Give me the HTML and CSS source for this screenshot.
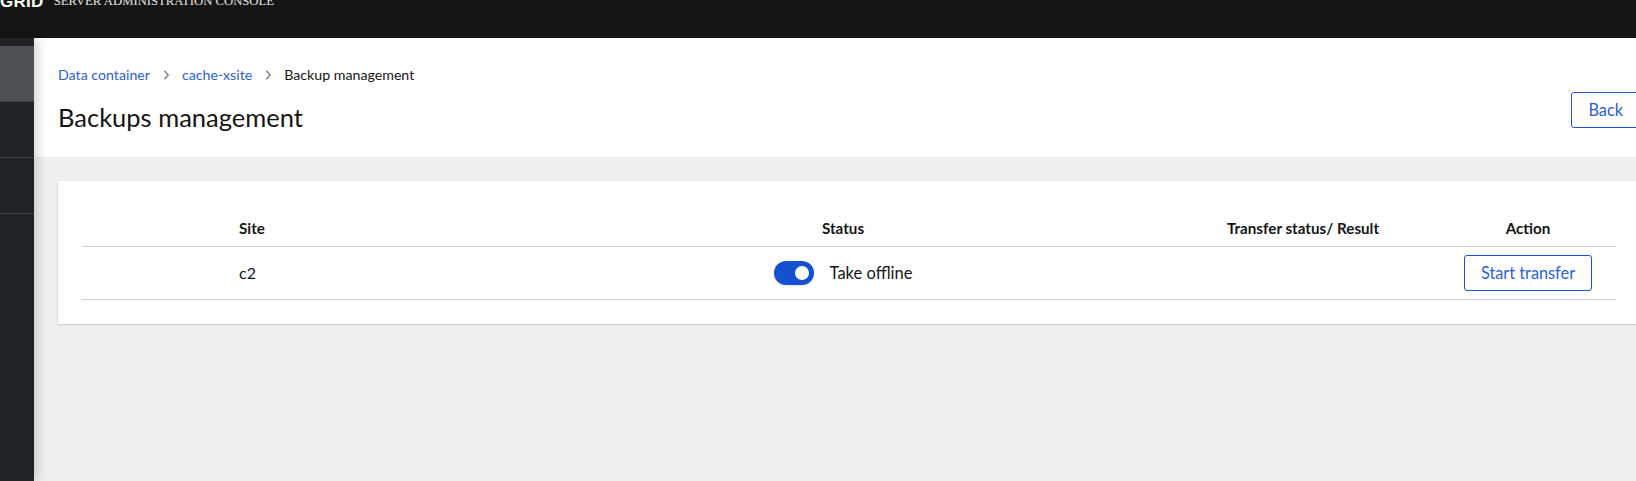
FILE: index.html
```html
<!DOCTYPE html>
<html lang="en">
<head>
<meta charset="utf-8">
<title>Backups management</title>
<link rel="stylesheet" href="styles.css">
</head>
<body>
<header class="masthead">
  <span class="logo">GRID</span>
  <span class="console-name">SERVER ADMINISTRATION CONSOLE</span>
</header>
<div class="shell">
  <nav class="sidebar">
    <div class="nav-item nav-item-active"></div>
    <div class="nav-item"></div>
    <div class="nav-item"></div>
  </nav>
  <main class="main">
    <section class="page-header">
      <ol class="breadcrumb">
        <li><a class="crumb-link" href="#">Data container</a></li>
        <li class="crumb-sep"><svg viewBox="0 0 8 12" width="7" height="10"><path d="M1.5 1 L6 6 L1.5 11" fill="none" stroke="#8a8d90" stroke-width="2"/></svg></li>
        <li><a class="crumb-link" href="#">cache-xsite</a></li>
        <li class="crumb-sep"><svg viewBox="0 0 8 12" width="7" height="10"><path d="M1.5 1 L6 6 L1.5 11" fill="none" stroke="#8a8d90" stroke-width="2"/></svg></li>
        <li class="crumb-current">Backup management</li>
      </ol>
      <div class="title-row">
        <h1 class="page-title">Backups management</h1>
        <button class="btn btn-secondary btn-back">Back</button>
      </div>
    </section>
    <section class="page-body">
      <div class="card">
        <div class="table">
          <div class="row row-head">
            <div class="cell cell-site">Site</div>
            <div class="cell">Status</div>
            <div class="cell">Transfer status/ Result</div>
            <div class="cell">Action</div>
          </div>
          <div class="row row-body">
            <div class="cell cell-site">c2</div>
            <div class="cell">
              <label class="switch">
                <span class="switch-toggle"><span class="switch-knob"></span></span>
                <span class="switch-label">Take offline</span>
              </label>
            </div>
            <div class="cell"></div>
            <div class="cell">
              <button class="btn btn-secondary">Start transfer</button>
            </div>
          </div>
        </div>
      </div>
    </section>
  </main>
</div>
</body>
</html>
```
FILE: styles.css
```css
html, body {
  margin: 0;
  padding: 0;
  width: 1636px;
  height: 481px;
  overflow: hidden;
}
body {
  font-family: "Lato", "Noto Sans", sans-serif;
  color: #151515;
  background: #f0f0f0;
}
.masthead {
  height: 38px;
  background: #151515;
  display: flex;
  align-items: flex-start;
  overflow: hidden;
}
.logo {
  font-family: "Liberation Sans", Arial, sans-serif;
  font-weight: 700;
  font-size: 17px;
  line-height: 17px;
  color: #fff;
  margin-top: -7px;
  margin-left: 0;
  letter-spacing: 0.3px;
}
.console-name {
  font-family: "Liberation Serif", "Times New Roman", serif;
  font-size: 12.7px;
  line-height: 12px;
  color: #e6e6e6;
  margin-top: -5px;
  margin-left: 10px;
}
.shell {
  display: flex;
  height: 443px;
}
.sidebar {
  width: 34px;
  flex-shrink: 0;
  background: #212427;
  padding-top: 8px;
  position: relative;
  z-index: 1;
  box-shadow: 3px 0 12px rgba(0, 0, 0, 0.18);
}
.nav-item {
  height: 55px;
  border-bottom: 1px solid #3c3f42;
}
.nav-item-active {
  background: #4f5255;
  border-bottom-color: #3c3f42;
}
.main {
  width: 1630px;
  flex-shrink: 0;
  display: flex;
  flex-direction: column;
}
.page-header {
  background: #fff;
  padding: 27px 24px 23px 24px;
}
.breadcrumb {
  list-style: none;
  margin: 0;
  padding: 0;
  display: flex;
  align-items: center;
  font-size: 14.2px;
  line-height: 20px;
}
.crumb-link {
  color: #2a5fd6;
  text-decoration: none;
}
.crumb-sep {
  display: flex;
  align-items: center;
  margin: 0 12px 0 13px;
}
.crumb-current {
  color: #151515;
}
.title-row {
  display: flex;
  justify-content: space-between;
  align-items: flex-start;
  margin-top: 7px;
}
.page-title {
  margin: 8px 0 0 0;
  font-size: 25.5px;
  line-height: 34px;
  font-weight: 400;
  color: #151515;
}
.btn {
  font-family: inherit;
  font-size: 16.3px;
  line-height: 20px;
  border-radius: 3px;
  cursor: pointer;
}
.btn-secondary {
  background: #fff;
  color: #2a5fd6;
  border: 1px solid #1a53d0;
  padding: 7px 16px;
}
.btn-back {
  height: 36px;
  padding: 7px 16px;
}
.page-body {
  flex: 1;
  background: #f0f0f0;
  padding: 24px;
}
.card {
  background: #fff;
  padding: 24px;
  box-shadow: 0 1px 2px rgba(0, 0, 0, 0.16), 0 0 1px rgba(0, 0, 0, 0.08);
}
.row {
  display: grid;
  grid-template-columns: 438px 646px 274px 176px;
  border-bottom: 1px solid #d2d2d2;
  align-items: center;
}
.row-head {
  height: 42px;
  font-size: 15.2px;
  font-weight: 700;
  line-height: 18px;
  padding-top: 4px;
  box-sizing: border-box;
}
.row-head .cell {
  align-self: center;
}
.row-body {
  height: 53px;
  box-sizing: border-box;
  font-size: 16px;
  line-height: 20px;
}
.cell {
  display: flex;
  justify-content: center;
  align-items: center;
  white-space: nowrap;
}
.cell-site {
  justify-content: flex-start;
  padding-left: 157px;
}
.switch {
  display: flex;
  align-items: center;
}
.switch-toggle {
  width: 40px;
  height: 24px;
  border-radius: 12px;
  background: #1450cf;
  display: flex;
  align-items: center;
  justify-content: flex-end;
  padding-right: 5px;
  box-sizing: border-box;
  box-shadow: 0 1px 3px rgba(0, 0, 0, 0.12);
}
.switch-knob {
  width: 14px;
  height: 14px;
  border-radius: 50%;
  background: #fff;
}
.switch-label {
  margin-left: 16px;
  font-size: 16.5px;
  color: #151515;
}
```
